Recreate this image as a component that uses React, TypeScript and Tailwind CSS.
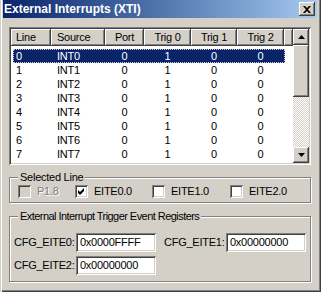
import React from "react";

const raised =
  "shadow-[inset_-1px_-1px_#404040,inset_1px_1px_#ffffff,inset_-2px_-2px_#808080,inset_2px_2px_#d4d0c8]";
const sunken =
  "shadow-[inset_1px_1px_#808080,inset_-1px_-1px_#ffffff,inset_2px_2px_#404040,inset_-2px_-2px_#d4d0c8]";
const etched = "border border-[#808080] shadow-[inset_1px_1px_#ffffff,1px_1px_#ffffff]";

const cols = [
  { name: "Line", w: "w-[40px]", align: "justify-start pl-[5px]" },
  { name: "Source", w: "w-[54px]", align: "justify-start pl-[6px]" },
  { name: "Port", w: "w-[39px]", align: "justify-center" },
  { name: "Trig 0", w: "w-[47px]", align: "justify-center" },
  { name: "Trig 1", w: "w-[46px]", align: "justify-center" },
  { name: "Trig 2", w: "w-[47px]", align: "justify-center" },
];

const rows = Array.from({ length: 8 }, (_, i) => [String(i), `INT${i}`, "0", "1", "0", "0"]);

const rowCols = [
  "w-[38px] pl-[3px] text-left",
  "w-[54px] pl-[6px] text-left",
  "w-[39px] text-center",
  "w-[47px] text-center",
  "w-[46px] text-center",
  "w-[47px] text-center",
];

function Arrow({ up }: { up?: boolean }) {
  return (
    <div className={`flex h-[16px] w-[16px] items-center justify-center bg-[#d4d0c8] ${raised}`}>
      <svg width="7" height="4" viewBox="0 0 7 4">
        <path d={up ? "M3.5 0 L7 4 L0 4 Z" : "M0 0 L7 0 L3.5 4 Z"} fill="#000" />
      </svg>
    </div>
  );
}

function Check({ checked, disabled, label, w }: { checked?: boolean; disabled?: boolean; label: string; w: string }) {
  return (
    <div className={`flex items-center ${w}`}>
      <div className={`relative h-[13px] w-[13px] ${disabled ? "bg-[#d4d0c8]" : "bg-white"} ${sunken}`}>
        {checked && (
          <svg className="absolute left-[3px] top-[3px]" width="7" height="7" viewBox="0 0 7 7">
            <path d="M0 2 L2 4 L6 0 L6 3 L2 7 L0 5 Z" fill="#000" />
          </svg>
        )}
      </div>
      <span
        className={`ml-[6px] ${disabled ? "text-[#808080] [text-shadow:1px_1px_#ffffff]" : "text-black"}`}
      >
        {label}
      </span>
    </div>
  );
}

function Field({ label, value }: { label: string; value: string }) {
  return (
    <div className="flex items-center">
      <span className="w-[62px] whitespace-nowrap">{label}</span>
      <div className={`flex h-[19px] w-[80px] items-center bg-white pl-[4px] ${sunken}`}>{value}</div>
    </div>
  );
}

export default function App() {
  return (
    <div
      className="flex h-[292px] w-[321px] flex-col bg-[#d4d0c8] pb-[4px] pl-[3px] pr-[4px] text-[11px] leading-none tracking-[-0.25px] text-black shadow-[inset_1px_0_#d4d0c8,inset_2px_0_#ffffff,inset_-1px_-1px_#404040,inset_-2px_-2px_#808080]"
      style={{ fontFamily: '"Liberation Sans", Arial, sans-serif' }}
    >
      <div className="flex h-[18px] shrink-0 items-center bg-gradient-to-r from-[#0a246a] to-[#a6caf0] pl-[1px] pr-[2px]">
        <span className="text-[12px] font-bold tracking-normal text-white">External Interrupts (XTI)</span>
        <div className={`ml-auto flex h-[14px] w-[16px] items-center justify-center bg-[#d4d0c8] ${raised}`}>
          <svg width="8" height="7" viewBox="0 0 8 7">
            <path d="M0 0 H2 L4 2 L6 0 H8 L5 3.5 L8 7 H6 L4 5 L2 7 H0 L3 3.5 Z" fill="#000" />
          </svg>
        </div>
      </div>

      <div className="flex flex-1 flex-col pl-[6px] pr-[6px]">
        {/* list view */}
        <div className={`mt-[9px] flex h-[138px] bg-white p-[2px] ${sunken}`}>
          <div className="flex flex-1 flex-col">
            <div className="flex h-[17px]">
              {cols.map((c) => (
                <div key={c.name} className={`flex items-center bg-[#d4d0c8] ${c.w} ${c.align} ${raised}`}>
                  {c.name}
                </div>
              ))}
              <div className={`flex-1 bg-[#d4d0c8] ${raised}`} />
            </div>
            <div className="mt-[3px] flex flex-col pl-[2px]">
              {rows.map((r, i) => (
                <div
                  key={i}
                  className={`flex h-[14px] w-[272px] items-center ${
                    i === 0 ? "bg-[#0a246a] text-white outline-1 -outline-offset-1 outline-dotted outline-[#d4d0c8]" : ""
                  }`}
                >
                  {r.map((v, j) => (
                    <span key={j} className={rowCols[j]}>
                      {v}
                    </span>
                  ))}
                </div>
              ))}
            </div>
          </div>
          <div className="flex w-[16px] flex-col">
            <Arrow up />
            <div className={`h-[52px] bg-[#d4d0c8] ${raised}`} />
            <div className="flex-1 bg-[repeating-conic-gradient(#d4d0c8_0_25%,#ffffff_0_50%)] bg-[length:2px_2px]" />
            <Arrow />
          </div>
        </div>

        {/* selected line */}
        <div className={`relative mt-[12px] h-[26px] ${etched}`}>
          <span className="absolute -top-[6px] left-[8px] bg-[#d4d0c8] px-[2px]">Selected Line</span>
          <div className="mt-[7px] flex pl-[8px]">
            <Check disabled label="P1.8" w="w-[57px]" />
            <Check checked label="EITE0.0" w="w-[77px]" />
            <Check label="EITE1.0" w="w-[78px]" />
            <Check label="EITE2.0" w="w-[70px]" />
          </div>
        </div>

        {/* registers */}
        <div className={`relative mt-[13px] h-[66px] ${etched}`}>
          <span className="absolute -top-[6px] left-[8px] bg-[#d4d0c8] px-[2px] tracking-[-0.55px]">
            External Interrupt Trigger Event Registers
          </span>
          <div className="mt-[16px] flex flex-col gap-[4px] pl-[4px]">
            <div className="flex">
              <Field label="CFG_EITE0:" value="0x0000FFFF" />
              <div className="ml-[8px]">
                <Field label="CFG_EITE1:" value="0x00000000" />
              </div>
            </div>
            <Field label="CFG_EITE2:" value="0x00000000" />
          </div>
        </div>
      </div>
    </div>
  );
}
